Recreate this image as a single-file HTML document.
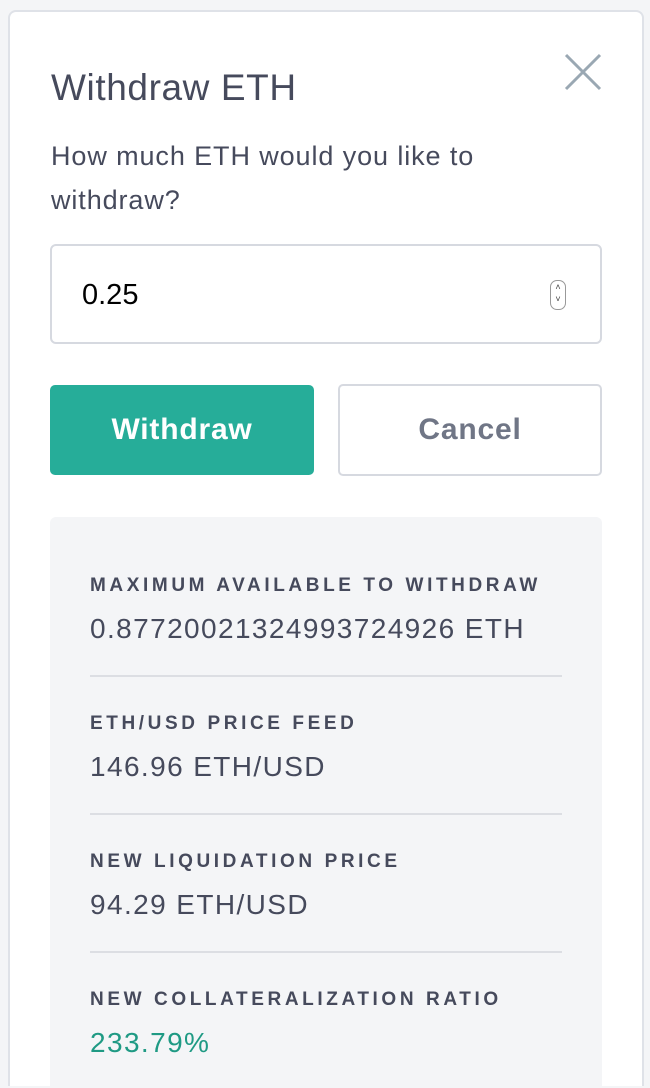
<!DOCTYPE html>
<html><head><style>
html,body{margin:0;width:650px;height:1088px;overflow:hidden}
body{background:#f4f5f7;font-family:"Liberation Sans",sans-serif;position:relative}
.card{position:absolute;left:8px;top:10px;width:632px;height:1074px;background:#fff;border:2px solid #dfe2e8;border-bottom:none;border-radius:8px 8px 0 0}
.t{position:absolute;left:51px;top:67px;font-size:37px;letter-spacing:0.6px;color:#464a5c;font-weight:500}
.x{position:absolute;left:562px;top:52px}
.s{position:absolute;left:51px;top:134px;font-size:27px;letter-spacing:0.9px;line-height:44px;color:#464a5c;width:480px}
.in{position:absolute;left:50px;top:244px;width:548px;height:96px;border:2px solid #d6d9e0;border-radius:6px}
.in span{position:absolute;left:30px;top:33px;font-size:29px;color:#000}
.sp{position:absolute;left:498px;top:34px;width:14px;height:28px;border:1px solid #999;border-radius:7px;font-size:9px;text-align:center;line-height:12px;color:#444}
.b1{position:absolute;left:50px;top:385px;width:264px;height:90px;background:#26ad99;border-radius:5px;color:#fff;font-size:30px;letter-spacing:0.8px;text-align:center;line-height:90px;font-weight:bold}
.b2{position:absolute;left:338px;top:384px;width:260px;height:88px;border:2px solid #d6d9e0;border-radius:5px;color:#707686;font-size:30px;letter-spacing:0.8px;text-align:center;line-height:88px;font-weight:bold}
.box{position:absolute;left:50px;top:517px;width:552px;height:571px;background:#f4f5f7;border-radius:6px 6px 0 0}
.it{position:absolute;left:40px;width:510px}
.l{font-size:19px;font-weight:bold;letter-spacing:3.6px;color:#464a5c;white-space:nowrap}
.v{font-size:28px;letter-spacing:1.4px;color:#464a5c;margin-top:16px;white-space:nowrap}
.hr{position:absolute;left:40px;width:472px;height:2px;background:#dcdee3}
</style></head><body>
<div class="card"></div>
<div class="t">Withdraw ETH</div>
<svg class="x" width="42" height="40"><path d="M4 3L38 37M38 3L4 37" stroke="#9aa8b3" stroke-width="3"/></svg>
<div class="s">How much ETH would you like to withdraw?</div>
<div class="in"><span>0.25</span><div class="sp">˄<br>˅</div></div>
<div class="b1">Withdraw</div>
<div class="b2">Cancel</div>
<div class="box">
<div class="it" style="top:58px"><div class="l">MAXIMUM AVAILABLE TO WITHDRAW</div><div class="v">0.87720021324993724926 ETH</div></div>
<div class="hr" style="top:158px"></div>
<div class="it" style="top:196px"><div class="l">ETH/USD PRICE FEED</div><div class="v">146.96 ETH/USD</div></div>
<div class="hr" style="top:296px"></div>
<div class="it" style="top:334px"><div class="l">NEW LIQUIDATION PRICE</div><div class="v">94.29 ETH/USD</div></div>
<div class="hr" style="top:434px"></div>
<div class="it" style="top:472px"><div class="l">NEW COLLATERALIZATION RATIO</div><div class="v" style="color:#1f9a84">233.79%</div></div>
</div>
</body></html>
